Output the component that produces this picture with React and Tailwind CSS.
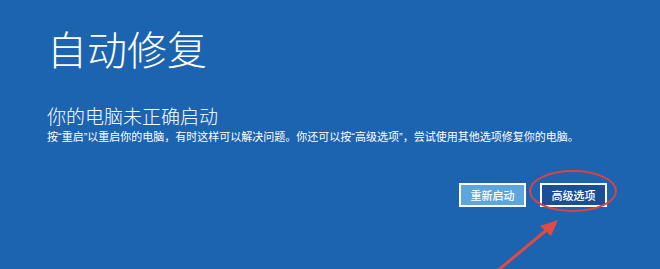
export default function App() {
  const font = { fontFamily: '"Noto Sans CJK SC", "Noto Sans", sans-serif' };
  const Q = ({ children }) => (
    <span className="font-['Liberation_Sans',sans-serif]">{children}</span>
  );
  return (
    <div
      className="relative w-[660px] h-[269px] overflow-hidden bg-[#1c63b0] text-white"
      style={font}
    >
      <div className="flex flex-col pl-[47px] pt-[28px]">
        <h1 className="text-[40px] leading-[40px] font-light">自动修复</h1>
        <div className="mt-[38px] text-[19px] leading-[20px] font-light">你的电脑未正确启动</div>
        <p className="mt-[3px] text-[11px] leading-[14px] whitespace-nowrap">
          按<Q>“</Q>重启<Q>”</Q>以重启你的电脑，有时这样可以解决问题。你还可以按<Q>“</Q>高级选项<Q>”</Q>，尝试使用其他选项修复你的电脑。
        </p>
        <div className="mt-[39px] flex justify-end gap-[14px] pr-[53px]">
          <button className="w-[67px] h-[24px] border-2 border-white bg-[#5ba6dd] text-[11px] font-medium text-white flex items-center justify-center">
            重新启动
          </button>
          <button className="w-[67px] h-[24px] border-2 border-white bg-[#1b4f95] text-[11px] font-medium text-white flex items-center justify-center">
            高级选项
          </button>
        </div>
      </div>
      <svg
        className="absolute left-0 top-0 pointer-events-none"
        width="660"
        height="269"
        viewBox="0 0 660 269"
      >
        <ellipse cx="573" cy="191" rx="43" ry="20" fill="none" stroke="#d64545" strokeWidth="2" />
        <line x1="496" y1="272" x2="549" y2="228" stroke="#e04a45" strokeWidth="3" />
        <polygon points="558,220 540,226 551,236" fill="#e04a45" />
      </svg>
    </div>
  );
}
